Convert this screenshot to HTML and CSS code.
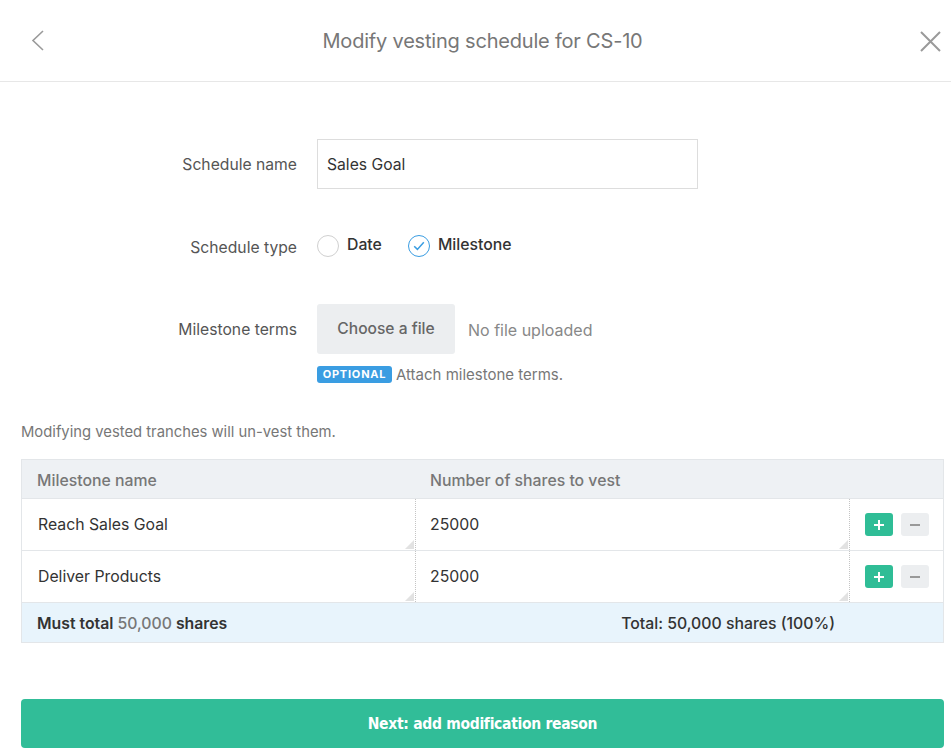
FILE: index.html
```html
<!DOCTYPE html>
<html lang="en">
<head>
<meta charset="utf-8">
<title>Modify vesting schedule for CS-10</title>
<link rel="stylesheet" href="styles.css">
</head>
<body>
<div class="modal">
  <header class="topbar">
    <button class="icon-btn back" aria-label="Back">
      <svg width="14" height="22" viewBox="0 0 14 22"><path d="M12 1 L2 10.5 L12 20" fill="none" stroke="#9a9a9a" stroke-width="1.6"/></svg>
    </button>
    <h1 class="title">Modify vesting schedule for CS-10</h1>
    <button class="icon-btn close" aria-label="Close">
      <svg width="21" height="21" viewBox="0 0 21 21"><path d="M1 1 L20 20 M20 1 L1 20" fill="none" stroke="#9a9a9a" stroke-width="2"/></svg>
    </button>
  </header>

  <main class="content">
    <div class="form">
      <div class="form-row row-name">
        <label class="form-label">Schedule name</label>
        <div class="form-control"><div class="text-input">Sales Goal</div></div>
      </div>
      <div class="form-row row-type">
        <label class="form-label">Schedule type</label>
        <div class="form-control radios">
          <span class="radio"><span class="radio-circle"></span><span class="radio-text">Date</span></span>
          <span class="radio checked"><span class="radio-circle"><svg width="12" height="10" viewBox="0 0 12 10"><path d="M1.2 5.2 L4.4 8.4 L10.8 1.2" fill="none" stroke="#3a9de2" stroke-width="1.5"/></svg></span><span class="radio-text">Milestone</span></span>
        </div>
      </div>
      <div class="form-row row-file">
        <label class="form-label">Milestone terms</label>
        <div class="form-control file">
          <span class="file-btn">Choose a file</span>
          <span class="file-status">No file uploaded</span>
        </div>
      </div>
      <div class="form-row row-hint">
        <span></span>
        <div class="form-control hint"><span class="badge">OPTIONAL</span><span class="hint-text">Attach milestone terms.</span></div>
      </div>
    </div>

    <p class="note">Modifying vested tranches will un-vest them.</p>

    <div class="table">
      <div class="tr thead">
        <div class="td c1">Milestone name</div>
        <div class="td c2">Number of shares to vest</div>
        <div class="td c3"></div>
      </div>
      <div class="tr body-row">
        <div class="td c1 editable">Reach Sales Goal</div>
        <div class="td c2 editable">25000</div>
        <div class="td c3 actions"><span class="sq plus"></span><span class="sq minus"></span></div>
      </div>
      <div class="tr body-row">
        <div class="td c1 editable">Deliver Products</div>
        <div class="td c2 editable">25000</div>
        <div class="td c3 actions"><span class="sq plus"></span><span class="sq minus"></span></div>
      </div>
      <div class="tr tfoot">
        <div class="td c1"><strong>Must total</strong> <span class="muted">50,000</span> <strong>shares</strong></div>
        <div class="td c2 total">Total: 50,000 shares (100%)</div>
        <div class="td c3"></div>
      </div>
    </div>

    <button class="next-btn">Next: add modification reason</button>
  </main>
</div>
</body>
</html>
```
FILE: styles.css
```css
html, body {
  margin: 0;
  padding: 0;
  overflow: hidden;
  background: #fff;
}
body {
  font-family: "Inter", "Open Sans", "Liberation Sans", sans-serif;
  color: #333;
}
.modal {
  width: 966px;
}
.topbar {
  height: 81px;
  border-bottom: 1px solid #e7e7e7;
  display: flex;
  align-items: center;
  justify-content: space-between;
  padding: 0 25px 0 31px;
}
.icon-btn {
  background: none;
  border: 0;
  padding: 0;
  display: flex;
}
.back { width: 14px; height: 22px; margin-top: 1px; }
.close { width: 21px; height: 21px; margin-top: 2px; }
.title {
  margin: 0;
  font-size: 20px;
  font-weight: 400;
  color: #777;
  letter-spacing: -0.2px;
}
.content {
  padding: 0 22px 0 21px;
}
.form {
  padding-top: 57px;
  display: grid;
  grid-template-columns: 276px 1fr;
  column-gap: 20px;
}
.form-row {
  display: contents;
}
.form-label {
  text-align: right;
  font-size: 15.7px;
  color: #555;
  align-self: center;
}
.text-input {
  width: 370px;
  height: 48px;
  border: 1px solid #ddd;
  font-size: 15.7px;
  color: #333;
  display: flex;
  align-items: center;
  padding-left: 9px;
  box-sizing: content-box;
}
.row-type .form-control { margin-top: 46px; }
.row-type .form-label { margin-top: 48px; }
.radios {
  display: flex;
  align-items: center;
  height: 22px;
}
.radio {
  display: inline-flex;
  align-items: center;
  margin-right: 26px;
}
.radio-circle {
  width: 20px;
  height: 20px;
  border: 1px solid #d0d0d0;
  border-radius: 50%;
  display: inline-flex;
  align-items: center;
  justify-content: center;
}
.radio.checked .radio-circle { border-color: #3a9de2; }
.radio-text {
  margin-left: 8px;
  font-size: 15.8px;
  font-weight: 500;
  color: #333;
  position: relative;
  top: -2px;
}
.row-file .form-control, .row-file .form-label { margin-top: 47px; }
.file {
  display: flex;
  align-items: center;
}
.file-btn {
  width: 138px;
  height: 50px;
  background: #eceef0;
  border-radius: 3px;
  display: flex;
  align-items: center;
  justify-content: center;
  font-size: 15.6px;
  font-weight: 500;
  color: #666;
  padding-bottom: 1px;
  box-sizing: border-box;
}
.file-status {
  margin-left: 13px;
  font-size: 16px;
  color: #888;
  position: relative;
  top: 1px;
}
.row-hint .form-control { margin-top: 12px; }
.hint {
  display: flex;
  align-items: center;
  height: 17px;
  line-height: 17px;
}
.badge {
  display: inline-flex;
  align-items: center;
  justify-content: center;
  width: 75px;
  height: 17px;
  background: #3a9de2;
  color: #fff;
  border-radius: 3px;
  font-size: 11px;
  font-weight: 700;
  letter-spacing: 0.8px;
}
.hint-text {
  margin-left: 4px;
  font-size: 15px;
  color: #777;
}
.note {
  margin: 39px 0 17px;
  font-size: 14.8px;
  line-height: 20px;
  color: #777;
}
.table {
  border: 1px solid #e3e6e9;
  border-top: 0;
}
.tr {
  display: grid;
  grid-template-columns: 394px 434px 1fr;
  border-top: 1px solid #e3e6e9;
}
.td {
  font-size: 15.8px;
  display: flex;
  align-items: center;
  padding-left: 15px;
}
.thead {
  background: #eef1f4;
  height: 38px;
}
.thead .td {
  font-weight: 500;
  color: #777;
  padding-top: 3px;
}
.thead .c2 { padding-left: 14px; }
.body-row {
  height: 51px;
}
.editable {
  position: relative;
  border-right: 1px dotted #c4c4c4;
  color: #333;
  padding-left: 16px;
  padding-bottom: 0;
}
.editable.c2 { padding-left: 14px; }
.editable::after {
  content: "";
  position: absolute;
  right: 1px;
  bottom: 1px;
  width: 0;
  height: 0;
  border-style: solid;
  border-width: 0 0 9px 9px;
  border-color: transparent transparent #e2e2e2 transparent;
}
.actions {
  padding-left: 15px;
  gap: 8px;
}
.sq {
  width: 28px;
  height: 23px;
  border-radius: 3px;
  position: relative;
  display: inline-block;
}
.plus { background: #2fbd96; }
.plus::before, .plus::after {
  content: "";
  position: absolute;
  background: #fff;
  left: 50%;
  top: 50%;
  transform: translate(-50%, -50%);
}
.plus::before { width: 10px; height: 2px; }
.plus::after { width: 2px; height: 10px; }
.minus { background: #eceef0; }
.minus::before {
  content: "";
  position: absolute;
  background: #999;
  left: 50%;
  top: 50%;
  width: 10px;
  height: 2px;
  transform: translate(-50%, -50%);
}
.tfoot {
  background: #e8f4fc;
  height: 39px;
}
.tfoot .td { color: #333; padding-top: 1px; }
.tfoot strong { font-weight: 600; }
.tfoot .muted { color: #777; font-weight: 500; margin: 0 4px; }
.tfoot .c1 { white-space: pre; }
.total {
  justify-content: flex-end;
  padding-right: 15px;
  font-weight: 500;
}
.next-btn {
  display: block;
  width: 100%;
  height: 49px;
  margin-top: 56px;
  background: #31bd98;
  border: 0;
  border-radius: 4px;
  color: #fff;
  font-family: "DejaVu Sans Condensed", "DejaVu Sans", sans-serif;
  font-stretch: condensed;
  font-weight: 700;
  font-size: 15.5px;
  letter-spacing: -0.3px;
}
```
